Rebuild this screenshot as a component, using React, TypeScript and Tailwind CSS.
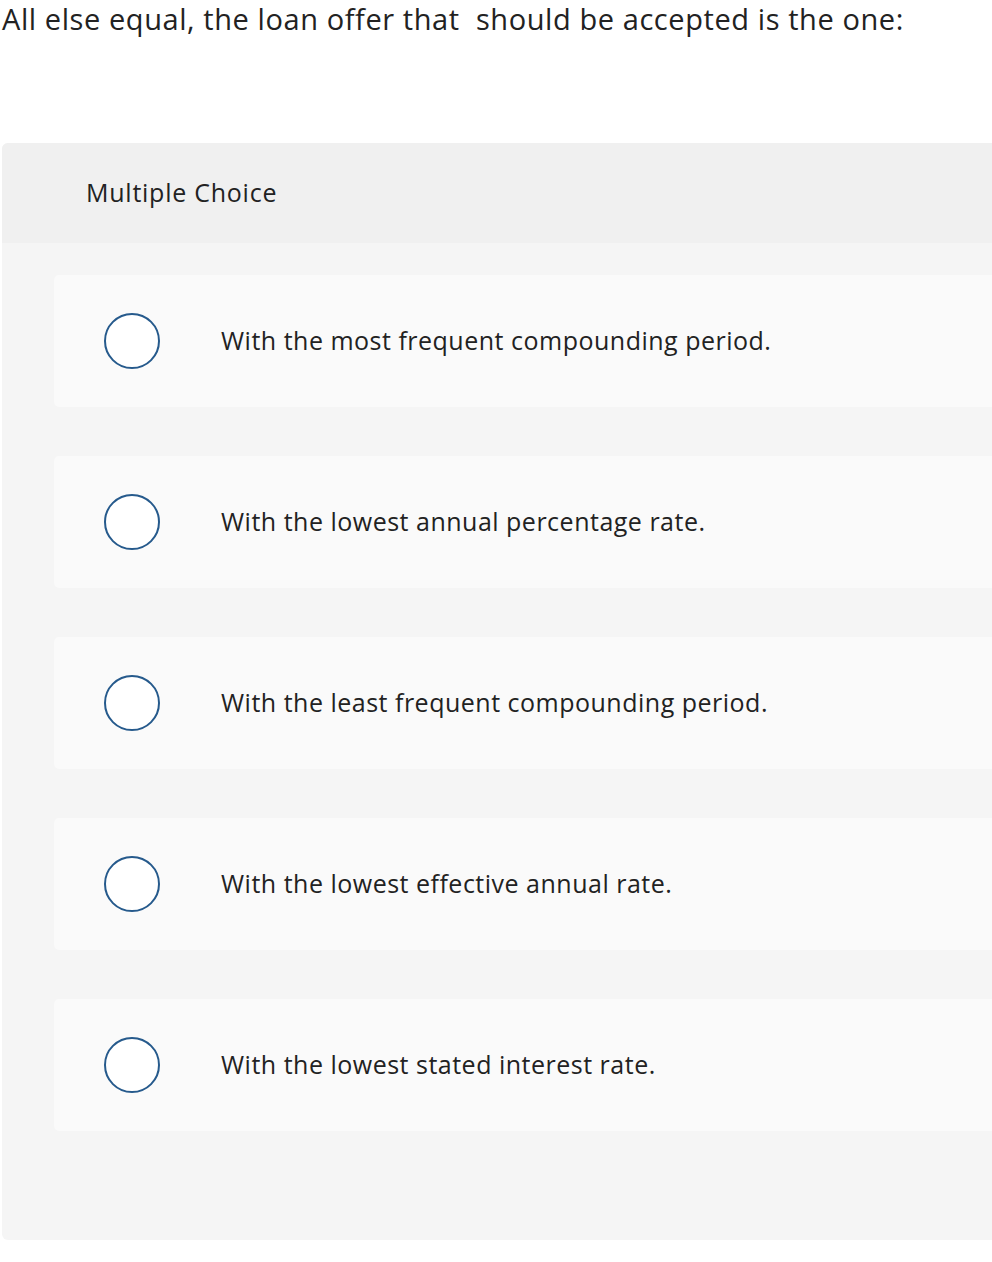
import React from "react";

const options = [
  "With the most frequent compounding period.",
  "With the lowest annual percentage rate.",
  "With the least frequent compounding period.",
  "With the lowest effective annual rate.",
  "With the lowest stated interest rate.",
];

export default function App() {
  return (
    <div
      className="w-[992px] h-[1262px] overflow-hidden bg-white text-[#222222]"
      style={{ fontFamily: "'Open Sans', Lato, sans-serif" }}
    >
      <h1 className="pl-[2px] pt-[0px] text-[29px] leading-[38px] tracking-[0.02em] font-normal whitespace-pre">
        All else equal, the loan offer that  should be accepted is the one:
      </h1>
      <div className="ml-[2px] mt-[105px] w-[1100px] rounded-[6px] bg-[#f5f5f5] pb-[109px]">
        <div className="h-[100px] rounded-t-[6px] bg-[#f0f0f0] flex items-center pl-[84px]">
          <span className="text-[25px] tracking-[0.03em]">Multiple Choice</span>
        </div>
        <div className="pt-[32px] pl-[52px] flex flex-col gap-[49px]">
          {options.map((o) => (
            <div
              key={o}
              className="h-[132px] rounded-[5px] bg-[#fafafa] flex items-center pl-[50px]"
            >
              <div className="w-[56px] h-[56px] rounded-full border-2 border-[#265a8c] bg-white shrink-0" />
              <span className="ml-[61px] text-[25px] tracking-[0.02em]">{o}</span>
            </div>
          ))}
        </div>
      </div>
    </div>
  );
}
